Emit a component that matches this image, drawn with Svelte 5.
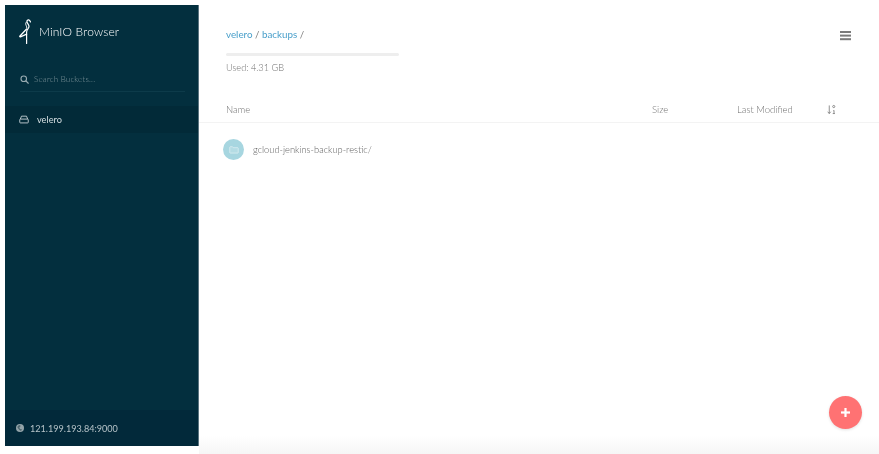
<script>
  const columns = [
    { label: 'Size', cls: 'col-size' },
    { label: 'Last Modified', cls: 'col-modified' }
  ];
</script>

<div class="page">
  <aside class="sidebar">
    <header class="brand">
      <svg class="logo" viewBox="0 0 12 25" width="12" height="25" fill="none" stroke="#fff" stroke-linecap="round" stroke-linejoin="round">
        <path d="M7.6 24.4V13c0-2.4 2.400-3.200 2.400-5.800 0-1.700-2.100-3-2.100-4.600C7.900 1.400 8.800.7 9.700.9c.7.2 1.300.9 1.800 2" stroke-width="1.200"/>
        <path d="M7.400 3.200C5.400 5 7.800 6.400 7.800 8.600" stroke-width="1"/>
        <path d="M7.600 10 1 17c-.5.600-.2 1 .5.800l6.100-2.600" stroke-width="1.300"/>
      </svg>
      <span class="brand-name">MinIO Browser</span>
    </header>

    <div class="search">
      <svg viewBox="0 0 12 12" width="9" height="9" fill="none" stroke="#9aacb2" stroke-width="1.500" stroke-linecap="round"><circle cx="5" cy="5" r="3.700"/><path d="m8 8 3 3"/></svg>
      <span>Search Buckets...</span>
    </div>

    <nav class="buckets">
      <div class="bucket">
        <svg viewBox="0 0 12 10" width="10" height="9" fill="none" stroke="#d6dfe2" stroke-width="1"><path d="M1.600 4.500 3 1h6l1.400 3.500"/><rect x=".9" y="4.500" width="10.200" height="4.600" rx=".8"/></svg>
        <span>velero</span>
      </div>
    </nav>

    <footer class="host">
      <svg viewBox="0 0 12 12" width="8" height="8"><circle cx="6" cy="6" r="6" fill="#93a3a9"/><path d="M3 2.500 6 1.500l1 2-2 1.500 1 2.500 3 .5-1.500 2.500-2-1L3.500 7 2 5z" fill="#4f666e"/></svg>
      <span>121.199.193.84:9000</span>
    </footer>
  </aside>

  <main class="content">
    <section class="top">
      <div class="path-block">
        <div class="crumbs"><a href="#velero">velero</a> / <a href="#backups">backups</a> /</div>
        <div class="usage"></div>
        <div class="used">Used: 4.31 GB</div>
      </div>
      <svg class="menu" viewBox="0 0 12 10" width="12" height="10" fill="#7b7b7b"><rect width="11" height="2" y="0"/><rect width="11" height="2" y="3.600"/><rect width="11" height="2" y="7.200"/></svg>
    </section>

    <div class="table-head">
      <span class="col-name">Name</span>
      {#each columns as col}
        <span class={col.cls}>{col.label}</span>
      {/each}
      <svg class="sort" viewBox="0 0 10 11" width="9" height="11" fill="none" stroke="#777" stroke-width=".9">
        <path d="M2.500 1v9M.8 8l1.700 2 1.700-2"/>
        <circle cx="7.500" cy="2.200" r="1.200"/>
        <path d="M7 7l.8-.6V10M6.400 10h2.400"/>
      </svg>
    </div>

    <div class="row">
      <span class="folder">
        <svg viewBox="0 0 12 10" width="10" height="8" fill="#fff" fill-opacity=".15" stroke="#fff" stroke-opacity=".7" stroke-width=".8"><path d="M.7 1.600c0-.4.3-.7.7-.7h2.700l1 1.200h5.500c.4 0 .7.3.7.700v5.400c0 .4-.3.700-.7.700H1.400a.7.700 0 0 1-.7-.7z"/></svg>
      </span>
      <span class="row-name">gcloud-jenkins-backup-restic/</span>
    </div>

    <button class="fab" aria-label="Add">
      <svg viewBox="0 0 9 9" width="9" height="9" fill="#fff"><rect x="3.400" width="2.200" height="9"/><rect y="3.400" width="9" height="2.200"/></svg>
    </button>
  </main>
  <div class="fade"></div>
</div>

<style>
  :global(body) {
    margin: 0;
    background: #fff;
    font-family: Lato, "Open Sans", sans-serif;
  }
  .page {
    position: relative;
    display: flex;
    height: 441px;
    padding: 5px 0 8px 5px;
    overflow: hidden;
    background: #fff;
    filter: blur(.3px);
  }
  .fade {
    position: absolute;
    left: 199px;
    right: 0;
    bottom: 0;
    height: 18px;
    background: linear-gradient(to bottom, rgba(246,246,246,0), #f6f6f6);
    pointer-events: none;
  }
  .sidebar {
    display: flex;
    flex-direction: column;
    flex: none;
    width: 193px;
    background: #032f3e;
    border-right: 1px solid #5b7480;
  }
  .brand {
    display: flex;
    align-items: center;
    gap: 8px;
    padding: 13px 0 0 14px;
    height: 26px;
  }
  .logo { flex: none; }
  .brand-name {
    color: #fff;
    font-size: 12px;
    font-weight: 300;
    letter-spacing: .12px;
  }
  .search {
    display: flex;
    align-items: center;
    gap: 5px;
    margin: 27px 13px 0 15px;
    padding-bottom: 4px;
    height: 16px;
    border-bottom: 1px solid #0d3b4a;
    color: #84999f;
    font-size: 8px;
    font-weight: 300;
    letter-spacing: .2px;
  }
  .buckets { margin-top: 14px; flex: 1; }
  .bucket {
    display: flex;
    align-items: center;
    gap: 8px;
    height: 27px;
    padding-left: 14px;
    background: #022a38;
    color: #d6dfe2;
    font-size: 9.2px;
  }
  .host {
    display: flex;
    align-items: center;
    gap: 6px;
    height: 36px;
    padding-left: 11px;
    background: #02293a;
    color: #b6c3c8;
    font-size: 9.1px;
  }
  .content {
    position: relative;
    flex: 1;
    min-width: 0;
  }
  .top {
    display: flex;
    justify-content: space-between;
    height: 78px;
    padding: 0 28px 0 27px;
  }
  .path-block { padding-top: 23px; width: 173px; }
  .crumbs {
    color: #808080;
    font-size: 9.8px;
    line-height: 13px;
  }
  .crumbs a { color: #4ba0cb; text-decoration: none; }
  .usage {
    height: 3px;
    margin-top: 12px;
    border-radius: 2px;
    background: #eeeeee;
  }
  .used {
    margin-top: 6px;
    color: #707070;
    font-size: 9.2px;
    font-weight: 300;
    line-height: 12px;
  }
  .menu { margin-top: 26px; margin-right: -1px; }
  .table-head {
    display: flex;
    align-items: center;
    height: 46px;
    margin-top: -6px;
    padding: 20px 0 0 27px;
    border-bottom: 1px solid #f3f3f3;
    color: #707070;
    font-size: 9.5px;
    font-weight: 300;
    box-sizing: border-box;
  }
  .col-name { width: 426px; }
  .col-size { width: 85px; }
  .col-modified { width: 90px; }
  .sort { flex: none; }
  .row {
    display: flex;
    align-items: center;
    gap: 9px;
    height: 53px;
    padding-left: 24px;
    color: #606060;
    font-size: 9.3px;
    font-weight: 300;
  }
  .folder {
    display: flex;
    align-items: center;
    justify-content: center;
    width: 21px;
    height: 21px;
    border-radius: 50%;
    background: #a7d6e0;
  }
  .fab {
    position: absolute;
    right: 17px;
    bottom: 17px;
    display: flex;
    align-items: center;
    justify-content: center;
    width: 33px;
    height: 33px;
    padding: 0;
    border: 0;
    border-radius: 50%;
    background: #ff7273;
    box-shadow: 0 1px 3px rgba(0,0,0,.12);
  }
</style>
